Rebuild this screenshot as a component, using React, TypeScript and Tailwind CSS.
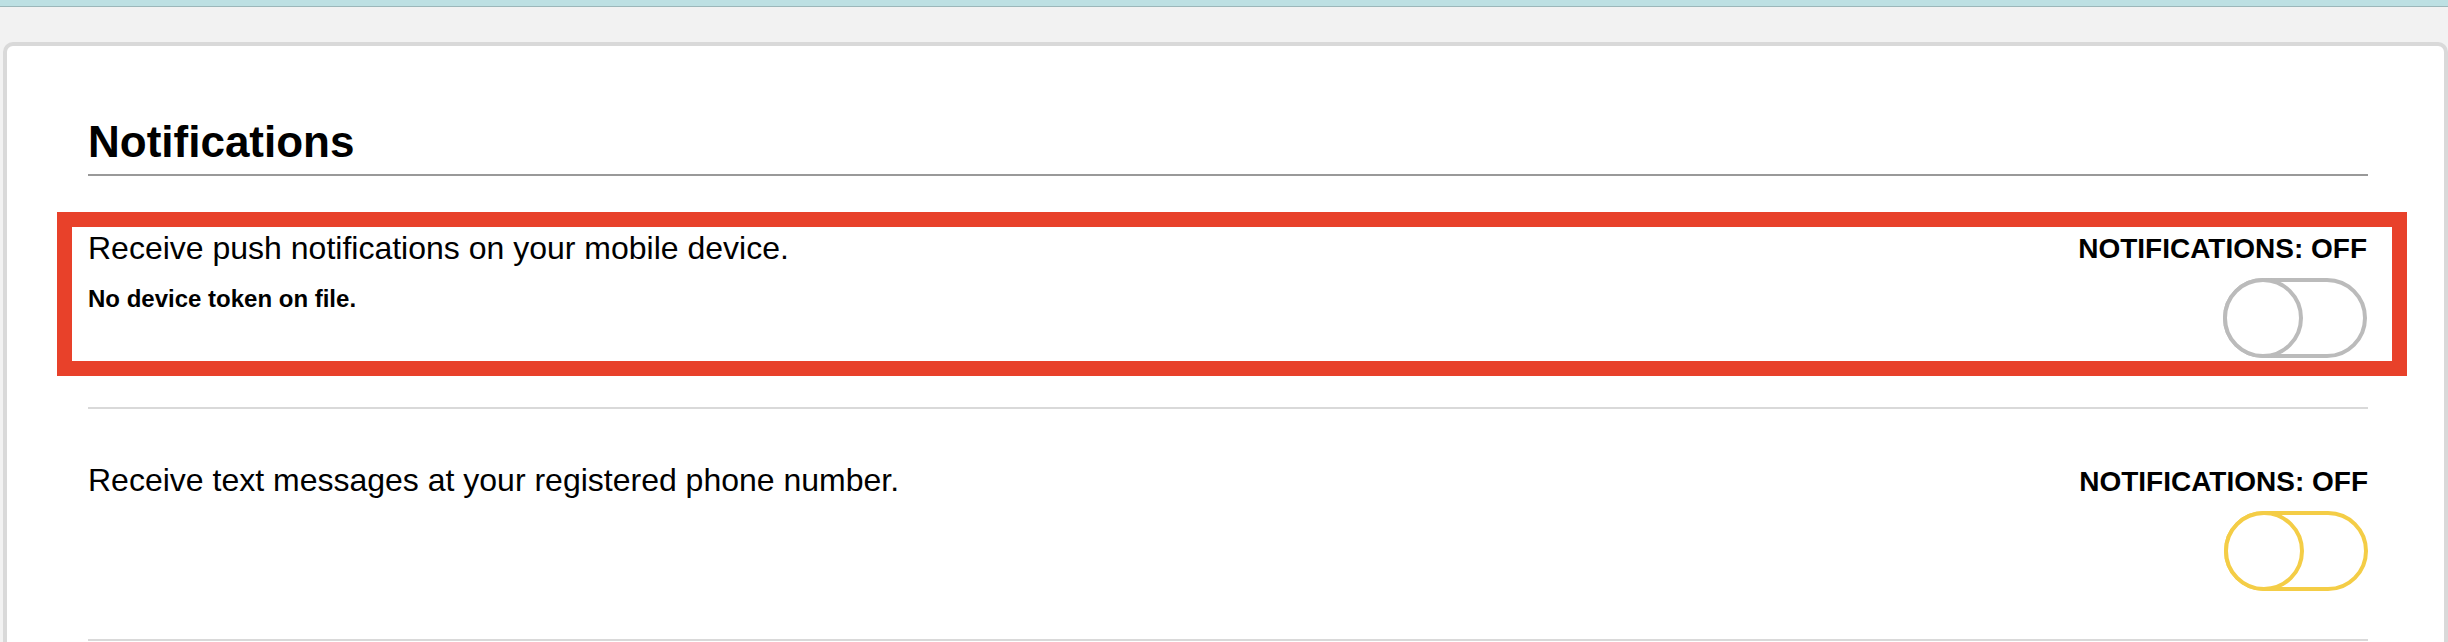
type Tone = 'gray' | 'yellow';

const TONE_BORDER: Record<Tone, string> = {
  gray: 'border-[#bbbbbb]',
  yellow: 'border-[#f4cd46]',
};

function Toggle({ tone }: { tone: Tone }) {
  const border = TONE_BORDER[tone];
  return (
    <span className={`relative block h-[80px] w-[144px] rounded-full border-[4px] ${border}`}>
      <span
        className={`absolute -left-[4px] -top-[4px] h-[80px] w-[80px] rounded-full border-[4px] bg-white ${border}`}
        aria-hidden
      />
    </span>
  );
}

function StatusColumn({ tone, offset }: { tone: Tone; offset: string }) {
  return (
    <div className="flex shrink-0 flex-col items-end">
      <p className={`${offset} text-[28px] font-bold leading-[28px] text-black`}>
        NOTIFICATIONS: OFF
      </p>
      <div className="mt-[15px]">
        <Toggle tone={tone} />
      </div>
    </div>
  );
}

export default function App() {
  return (
    <div className="min-h-[642px] overflow-hidden bg-[#f2f2f2] font-['Liberation_Sans',Arial,sans-serif] text-black">
      <div className="h-[6px] bg-[#bde0e3]" />
      <div className="h-[1px] bg-[#9cb7ba]" />

      <section className="ml-[3px] mt-[35px] rounded-t-[10px] border-[4px] border-[#d9d9d9] bg-white pb-[40px] pl-[81px] pr-[76px] pt-[74px]">
        <h2 className="border-b-2 border-[#999999] pb-[10px] text-[44px] font-bold leading-[44px]">
          Notifications
        </h2>

        {/* push row, outlined */}
        <div className="-ml-[31px] -mr-[39px] mt-[36px] border-[15px] border-[#e8412a] pb-[3px] pl-[16px] pr-[25px] pt-[5px]">
          <div className="flex items-start justify-between">
            <div>
              <p className="text-[32px] leading-[32px]">
                Receive push notifications on your mobile device.
              </p>
              <p className="mt-[23px] text-[24px] font-bold leading-[24px]">
                No device token on file.
              </p>
            </div>
            <StatusColumn tone="gray" offset="mt-[3px]" />
          </div>
        </div>

        <div className="mt-[31px] h-[2px] bg-[#d9d9d9]" />

        <div className="flex items-start justify-between pt-[55px]">
          <p className="text-[32px] leading-[32px]">
            Receive text messages at your registered phone number.
          </p>
          <StatusColumn tone="yellow" offset="mt-[4px]" />
        </div>

        <div className="mt-[48px] h-[2px] bg-[#d9d9d9]" />
      </section>
    </div>
  );
}
